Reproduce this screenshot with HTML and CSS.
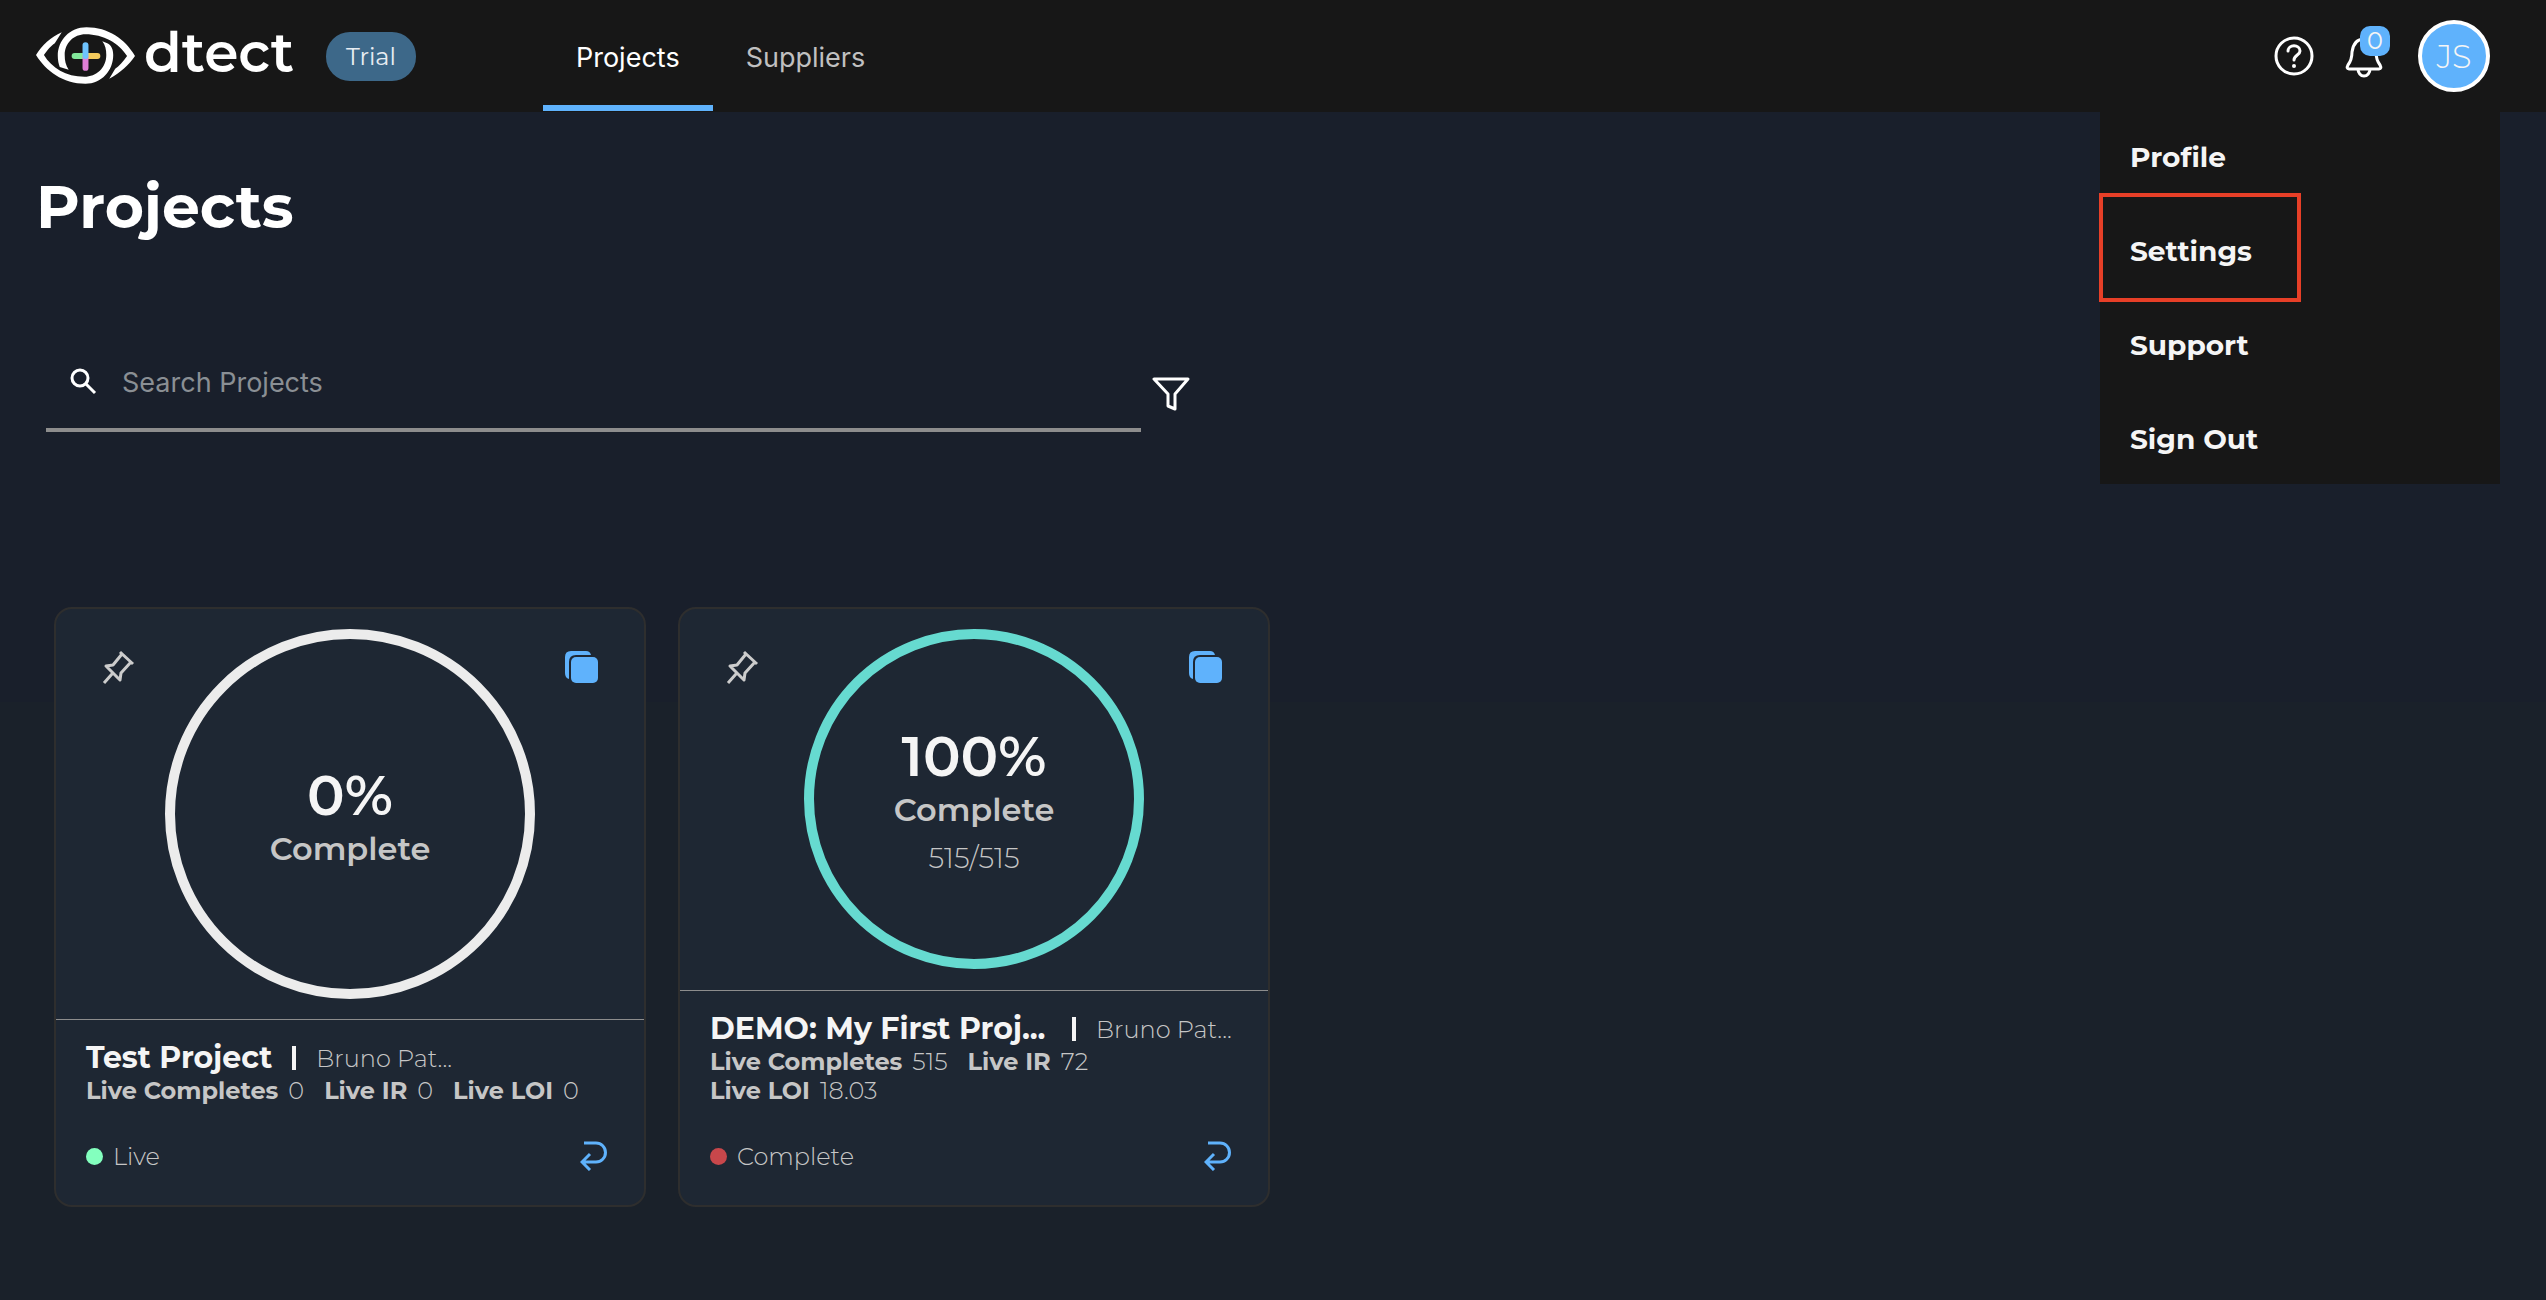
FILE: index.html
```html
<!DOCTYPE html>
<html lang="en">
<head>
<meta charset="utf-8">
<title>dtect – Projects</title>
<link rel="stylesheet" href="styles.css">
</head>
<body>
<header class="topbar">
  <a class="brand" href="#">
    <svg class="brand-eye" viewBox="0 0 100 58" aria-hidden="true">
      <g fill="#fff">
        <path d="M26 5C15 10 6 18 0 28C10 44 27 57 50 57C66 57 78 44 78 28C78 22 76 18 72 16L67 14C70 18 71 22 71 28C71 41 61 50 49 50C30 50 16 41 8 28C12 22 15 19 19 16Z"/>
        <path d="M74 52C85 46 94 38 100 29C90 12 73 0 51 0C34 0 22 13 22 29C22 34 23 37 24 40L33 43C30 38 29 34 29 28C29 16 38 7 50 7C68 7 84 16 92 29C88 35 84 39 80 42Z"/>
      </g>
      <g stroke-width="6" stroke-linecap="round">
        <path d="M39 29H50" stroke="#82e89b"/><path d="M50 29H62" stroke="#f5cb5c"/>
        <path d="M50 30V41" stroke="#e07fd6"/><path d="M50 18V29" stroke="#6ec3ff"/>
      </g>
    </svg>
    <span class="brand-name">dtect</span>
  </a>
  <span class="plan">Trial</span>
  <nav class="tabs">
    <a class="tab tab-active" href="#">Projects</a>
    <a class="tab" href="#">Suppliers</a>
  </nav>
  <div class="tools">
    <button class="icon-btn" aria-label="Help">
      <svg width="40" height="40" viewBox="0 0 40 40" fill="none" stroke="#fff" stroke-width="3">
        <circle cx="20" cy="20" r="18"/>
        <path d="M14 15C14 8 26 8 26 15C26 19 20 19 20 24" stroke-linecap="round"/>
        <circle cx="20" cy="30" r="2" fill="#fff" stroke="none"/>
      </svg>
    </button>
    <button class="icon-btn bell" aria-label="Notifications">
      <svg width="38" height="42" viewBox="0 0 38 42" fill="none" stroke="#fff" stroke-width="3" stroke-linejoin="round">
        <path d="M19 3C11 3 8 9 7 16C7 22 6 25 3 29Q1 33 4 33H34Q37 33 35 29C32 25 31 22 31 16C30 9 27 3 19 3Z"/>
        <path d="M13 33A6 7 0 0 0 25 33"/>
      </svg>
      <span class="badge">0</span>
    </button>
    <button class="avatar" aria-label="Account">JS</button>
    <nav class="menu" aria-label="Account menu">
      <a href="#">Profile</a>
      <a class="marked" href="#">Settings</a>
      <a href="#">Support</a>
      <a href="#">Sign Out</a>
    </nav>
  </div>
</header>
<main class="page">
  <h1>Projects</h1>
  <form class="search">
    <label class="field">
      <svg width="28" height="28" viewBox="0 0 28 28" fill="none" stroke="#fff" stroke-width="3" aria-hidden="true">
        <circle cx="10" cy="11" r="8"/><path d="M16 17L25 26"/>
      </svg>
      <input type="text" placeholder="Search Projects" aria-label="Search Projects">
    </label>
    <button class="icon-btn filter" type="button" aria-label="Filter">
      <svg width="38" height="36" viewBox="0 0 38 36" fill="none" stroke="#fff" stroke-width="3" stroke-linejoin="round">
        <path d="M2 3H36L23 18V33L16 30V18Z"/>
      </svg>
    </button>
  </form>
  <section class="cards">
    <article class="card">
      <div class="card-top">
        <button class="icon-btn pin" aria-label="Pin project">
          <svg width="34" height="36" viewBox="0 0 34 36" fill="none" stroke="#ccc" stroke-width="3" stroke-linejoin="round">
            <path d="M18 3L31 15M20 5L11 16L4 17L18 31L19 24L29 13M10 25L2 34"/>
          </svg>
        </button>
        <div class="ring ring-idle">
          <strong>0%</strong><span class="ring-label">Complete</span>
        </div>
        <button class="icon-btn copy" aria-label="Duplicate project">
          <svg width="34" height="34" viewBox="0 0 34 34" fill="#5fb2fc">
            <path d="M7 0H22Q26 0 27 4H12Q5 4 5 11V28Q1 27 1 22V6Q1 0 7 0Z"/><rect x="7" y="6" width="27" height="26" rx="5"/>
          </svg>
        </button>
      </div>
      <div class="card-body">
        <div class="title-row"><h2>Test Project</h2><i class="bar"></i><span class="owner">Bruno Pat...</span></div>
        <dl class="stats">
          <div><dt>Live Completes</dt><dd>0</dd></div>
          <div><dt>Live IR</dt><dd>0</dd></div>
          <div><dt>Live LOI</dt><dd>0</dd></div>
        </dl>
        <div class="status"><i class="dot dot-live"></i><span>Live</span>
          <button class="icon-btn open" aria-label="Open project">
            <svg width="28" height="30" viewBox="0 0 28 30" fill="none" stroke="#5fb2fc" stroke-width="3">
              <path d="M4 2H16A9 9 0 0 1 16 21H3M10 13L2 21L10 29"/>
            </svg>
          </button>
        </div>
      </div>
    </article>
    <article class="card">
      <div class="card-top">
        <button class="icon-btn pin" aria-label="Pin project">
          <svg width="34" height="36" viewBox="0 0 34 36" fill="none" stroke="#ccc" stroke-width="3" stroke-linejoin="round">
            <path d="M18 3L31 15M20 5L11 16L4 17L18 31L19 24L29 13M10 25L2 34"/>
          </svg>
        </button>
        <div class="ring ring-done">
          <strong>100%</strong><span class="ring-label">Complete</span><span class="ring-count">515/515</span>
        </div>
        <button class="icon-btn copy" aria-label="Duplicate project">
          <svg width="34" height="34" viewBox="0 0 34 34" fill="#5fb2fc">
            <path d="M7 0H22Q26 0 27 4H12Q5 4 5 11V28Q1 27 1 22V6Q1 0 7 0Z"/><rect x="7" y="6" width="27" height="26" rx="5"/>
          </svg>
        </button>
      </div>
      <div class="card-body">
        <div class="title-row"><h2 class="title-long">DEMO: My First Proj...</h2><i class="bar"></i><span class="owner">Bruno Pat...</span></div>
        <dl class="stats">
          <div><dt>Live Completes</dt><dd>515</dd></div>
          <div><dt>Live IR</dt><dd>72</dd></div>
          <div><dt>Live LOI</dt><dd>18.03</dd></div>
        </dl>
        <div class="status"><i class="dot dot-complete"></i><span>Complete</span>
          <button class="icon-btn open" aria-label="Open project">
            <svg width="28" height="30" viewBox="0 0 28 30" fill="none" stroke="#5fb2fc" stroke-width="3">
              <path d="M4 2H16A9 9 0 0 1 16 21H3M10 13L2 21L10 29"/>
            </svg>
          </button>
        </div>
      </div>
    </article>
  </section>
</main>
</body>
</html>
```
FILE: styles.css
```css
* { box-sizing: border-box; }
body {
  margin: 0;
  min-height: 100vh;
  background: linear-gradient(#191f2b 54%, #1a212a 54%);
  color: #f5f5f5;
  font-family: Montserrat, Inter, sans-serif;
  font-size: 24px;
}
a { color: inherit; text-decoration: none; }
svg { display: block; }
button { font: inherit; color: inherit; cursor: pointer; }
.icon-btn { padding: 0; border: 0; background: none; }

.topbar {
  display: flex;
  align-items: center;
  height: 112px;
  padding: 0 56px 0 36px;
  background: #171717;
}
.brand { display: flex; align-items: center; gap: 9px; }
.brand-eye { width: 99px; height: 58px; }
.brand-name {
  width: 150px;
  padding-bottom: 6px;
  color: #fff;
  font-size: 55px;
  font-weight: 600;
  line-height: 60px;
}
.plan {
  margin-left: 32px;
  padding: 0 20px;
  border-radius: 24px;
  background: #3d6889;
  line-height: 49px;
  color: #e8edf2;
}
.tabs {
  display: flex;
  align-self: stretch;
  margin-left: 127px;
  font-family: Inter, sans-serif;
  font-size: 27px;
}
.tab {
  height: 111px;
  padding: 3px 33px 0;
  border-bottom: 6px solid transparent;
  line-height: 110px;
  color: #c0c0c0;
}
.tab-active { border-color: #5fb2fc; color: #fff; }
.tools {
  position: relative;
  display: flex;
  align-items: center;
  margin-left: auto;
}
.bell { position: relative; margin: 2px 35px 0 31px; }
.badge {
  position: absolute;
  top: -10px;
  right: -7px;
  width: 30px;
  border-radius: 10px;
  background: #5fb2fc;
  line-height: 30px;
}
.avatar {
  width: 72px;
  height: 72px;
  padding: 0;
  border: 4px solid #fff;
  border-radius: 50%;
  background: #5fb2fc;
  font-size: 32px;
  font-weight: 300;
}
.menu {
  position: absolute;
  top: 92px;
  right: -10px;
  width: 400px;
  background: #171717;
  font-size: 28px;
  font-weight: 700;
}
.menu a {
  display: block;
  padding: 0 30px;
  line-height: 90px;
}
.menu a + a { margin-top: 4px; }
.menu .marked { position: relative; }
.marked::after {
  content: "";
  position: absolute;
  inset: -13px auto -6px -1px;
  box-sizing: border-box;
  width: 202px;
  border: 4px solid #e73f27;
}

.page { padding: 0 28px 0 36px; }
h1 { margin: 0; padding-top: 57px; font-size: 60px; line-height: 76px; color: #fff; }
.search {
  display: flex;
  align-items: center;
  gap: 11px;
  margin: 87px 0 0 10px;
}
.field {
  display: flex;
  align-items: center;
  gap: 24px;
  width: 43vw;
  height: 100px;
  padding: 2px 24px 0;
  border-bottom: 4px solid #8d8d8d;
}
.field input {
  flex: 1;
  min-width: 0;
  padding: 2px 0 0;
  border: 0;
  outline: 0;
  background: none;
  color: #fff;
  font: 27px Inter, sans-serif;
}
.field input::placeholder { color: #8a8f94; opacity: 1; }
.filter { margin-top: 24px; }

.cards {
  display: grid;
  grid-template-columns: repeat(4, 1fr);
  gap: 32px;
  padding: 175px 0 0 18px;
}
.card {
  display: flex;
  flex-direction: column;
  border: 2px solid #2e2e2e;
  border-radius: 18px;
  background: #1e2733;
}
.card-top {
  display: flex;
  flex: 1;
  align-items: flex-start;
  justify-content: space-between;
  padding: 20px 46px;
  border-bottom: 1px solid #8d8d8d;
}
.pin { margin-top: 20px; }
.copy { margin-top: 22px; }
.ring {
  display: flex;
  flex-direction: column;
  align-items: center;
  justify-content: center;
  width: 370px;
  aspect-ratio: 1;
  padding-top: 10px;
  border: 10px solid #ececec;
  border-radius: 50%;
  color: #c6c6c6;
}
.ring-done { width: 340px; border-color: #66dad0; }
.ring strong { color: #f5f5f5; font-size: 56px; font-weight: 600; line-height: 60px; }
.ring-label { font-size: 32px; font-weight: 600; line-height: 48px; }
.ring-count { font-size: 28px; font-weight: 300; line-height: 48px; }
.card-body { padding: 20px 30px 34px; color: #c6c6c6; }
.title-row { display: flex; align-items: center; white-space: nowrap; }
h2 { margin: 0; color: #f5f5f5; font-size: 30px; line-height: 36px; }
.title-long { width: 342px; }
.bar { width: 4px; height: 24px; margin: 0 20px; background: #f5f5f5; }
.owner { font-weight: 300; }
.stats { display: flex; flex-wrap: wrap; gap: 0 20px; margin: 0; line-height: 29px; }
.stats div { display: flex; gap: 10px; }
.stats dt { font-weight: 700; }
.stats dd { margin: 0; font-weight: 300; }
.status { display: flex; align-items: center; gap: 10px; margin-top: 36px; font-weight: 300; }
.dot { width: 17px; height: 17px; border-radius: 50%; }
.dot-live { background: #83ffbe; }
.dot-complete { background: #c8474b; }
.open { margin-left: auto; margin-right: 6px; }
```
